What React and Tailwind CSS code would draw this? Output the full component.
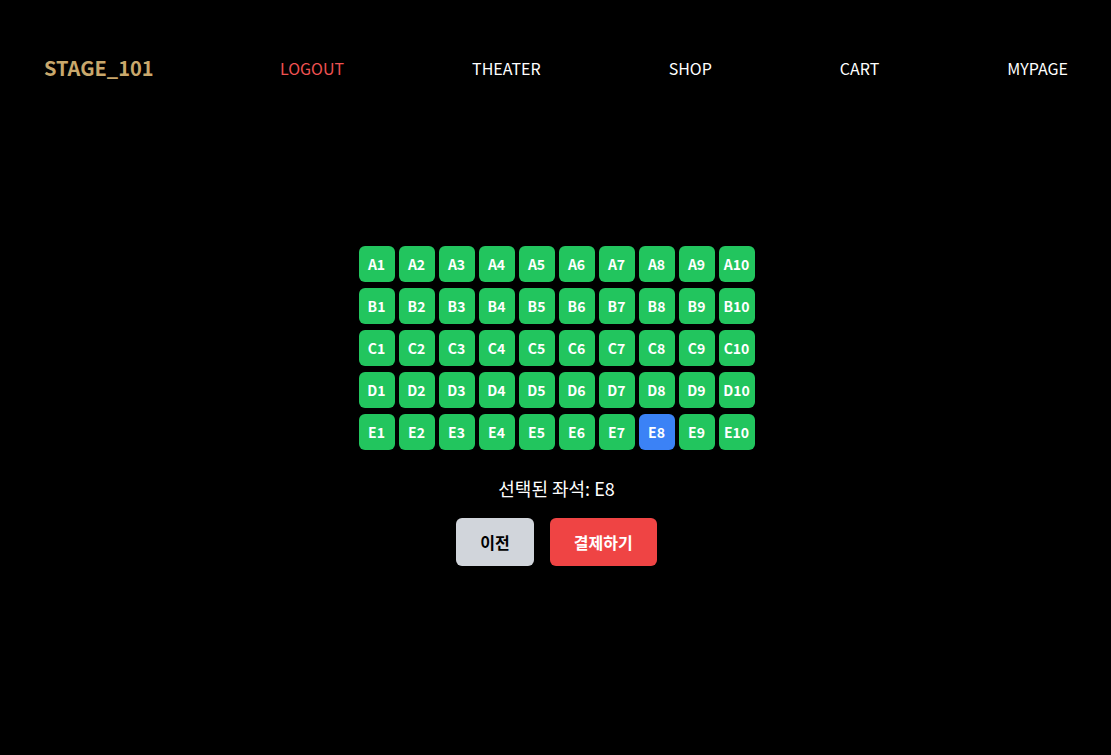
import React, { useState } from 'react'

const rows = ['A', 'B', 'C', 'D', 'E']
const cols = [1, 2, 3, 4, 5, 6, 7, 8, 9, 10]

const Header = () => {
  return (
    <header className="flex items-center justify-between pl-11 pr-[43px] h-[136px]">
      <div className="text-[20px] font-bold text-[#c9a86c]">STAGE_101</div>
      <nav className="flex items-center gap-32 text-base">
        <a className="text-[#f05252]">LOGOUT</a>
        <a className="text-white">THEATER</a>
        <a className="text-white">SHOP</a>
        <a className="text-white">CART</a>
        <a className="text-white">MYPAGE</a>
      </nav>
    </header>
  )
}

export default function App() {
  const [selected, setSelected] = useState('E8')

  return (
    <div
      className="min-h-[755px] bg-black text-white"
      style={{ fontFamily: '"Noto Sans CJK KR", "Noto Sans", sans-serif' }}
    >
      <Header />

      <main className="flex flex-col items-center pt-[110px] pl-[2px]">
        {/* Seat grid */}
        <div className="flex flex-col gap-1.5">
          {rows.map((r) => (
            <div key={r} className="flex gap-1">
              {cols.map((c) => {
                const id = r + c
                const isSel = id === selected
                return (
                  <button
                    key={id}
                    onClick={() => setSelected(id)}
                    className={
                      'w-9 h-9 rounded-md text-sm font-bold text-white flex items-center justify-center ' +
                      (isSel ? 'bg-[#3b82f6]' : 'bg-[#22c55e]')
                    }
                  >
                    {id}
                  </button>
                )
              })}
            </div>
          ))}
        </div>

        <p className="mt-6 text-lg">선택된 좌석: {selected}</p>

        <div className="flex gap-4 mt-4">
          <button className="px-6 h-12 rounded-md bg-[#d1d5db] text-black font-bold">
            이전
          </button>
          <button className="px-6 h-12 rounded-md bg-[#ef4444] text-white font-bold">
            결제하기
          </button>
        </div>
      </main>
    </div>
  )
}
